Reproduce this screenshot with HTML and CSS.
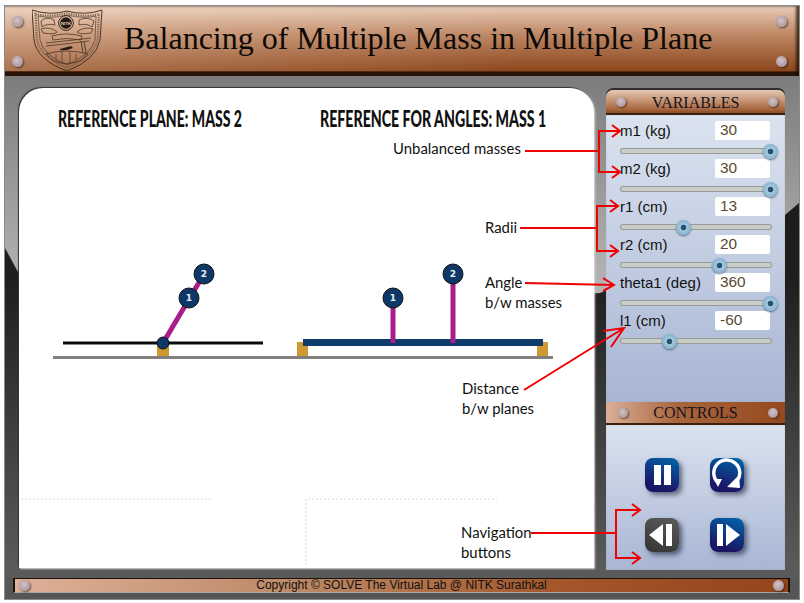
FILE: index.html
```html
<!DOCTYPE html>
<html lang="en">
<head>
<meta charset="utf-8">
<title>Balancing of Multiple Mass in Multiple Plane</title>
<link rel="stylesheet" href="styles.css">
</head>
<body>
<div class="app">
  <header class="banner">
    <span class="rivet rivet-tl"></span><span class="rivet rivet-bl"></span>
    <span class="rivet rivet-tr"></span><span class="rivet rivet-br"></span>
    <svg class="logo" viewBox="32 9 72 64" width="72" height="64" aria-label="NITK crest">
      <g fill="none" stroke="#3a2a1e">
        <path stroke-width=".9" d="M32 10 Q50 16 67 11 Q85 16 102 10 L100 40 Q96 60 67 71 Q37 60 34 40 Z"/>
        <path stroke-width=".6" d="M38 16 Q52 19 67 15 Q84 19 96 16 L95 40 Q91 55 67 65 Q43 55 40 40 Z"/>
        <path stroke-width="2" stroke="#7c5e4a" stroke-dasharray="1.2 1.2" d="M35.500 14 Q50 18 67 13 Q85 18 99 14 L97.500 40 Q93 57 67 68 Q41 57 37 40 Z"/>
        <path stroke-width=".7" d="M41 21 Q47 16 54 20 L55 25 Q47 23 42 27 Z M79 20 Q87 16 94 21 L92 27 Q87 23 79 25 Z"/>
        <path stroke-width=".7" d="M41 29 Q50 26 57 32 Q55 35 43 33 Z M77 32 Q84 26 93 29 L91 33 Q80 35 77 32 Z"/>
        <path stroke-width=".7" d="M52 36 Q66 32 82 36 L81 40 Q66 37 53 40 Z"/>
        <path stroke-width=".7" d="M46 43 Q66 41 91 38 M46 46 Q66 44 89 41"/>
        <path stroke-width=".8" d="M81 41 L83 53 M84 41 L86 53"/>
        <path stroke-width=".7" d="M46 54 Q66 48 88 54 L80 61 Q66 66 54 61 Z"/>
        <path stroke-width=".6" d="M56 60 V54 M62 63 V52 M70 63 V52 M76 60 V54"/>
        <circle cx="66" cy="23" r="7.4" stroke-width="1"/>
      </g>
      <circle cx="66" cy="23" r="5.8" fill="#241a14"/>
      <text class="logo-mark" x="66" y="24.600">NITK</text>
      <path fill="#241a14" d="M60 49 L71 46 L73 48 Q66 51 60 50 Z"/>
    </svg>
    <h1 class="title">Balancing of Multiple Mass in Multiple Plane</h1>
  </header>

  <main class="workspace">
    <section class="stage">
      <svg class="diagram" viewBox="19 88 575 480" width="575" height="480">
        <text class="plot-heading" transform="translate(58 127) scale(.65 1)" textLength="283" lengthAdjust="spacingAndGlyphs">REFERENCE PLANE: MASS 2</text>
        <text class="plot-heading" transform="translate(320 127) scale(.65 1)" textLength="348" lengthAdjust="spacingAndGlyphs">REFERENCE FOR ANGLES: MASS 1</text>

        <rect class="support" x="157" y="344" width="12" height="13"/>
        <rect class="support" x="297" y="342" width="11" height="15"/>
        <rect class="support" x="537" y="342" width="11" height="15"/>
        <line class="ground" x1="53" y1="357.5" x2="553" y2="357.5"/>

        <line class="shaft" x1="63" y1="343" x2="263" y2="343"/>
        <line class="arm" x1="163" y1="343" x2="204" y2="274"/>
        <circle class="mass" cx="163" cy="343" r="6"/>
        <circle class="mass" cx="204" cy="274" r="10"/>
        <circle class="mass" cx="189" cy="298" r="10"/>
        <text class="mass-label" x="204" y="277">2</text>
        <text class="mass-label" x="189" y="301">1</text>

        <rect class="beam" x="303" y="339" width="240" height="7"/>
        <line class="arm" x1="393" y1="298" x2="393" y2="343"/>
        <line class="arm" x1="453" y1="274" x2="453" y2="343"/>
        <circle class="mass" cx="393" cy="298" r="10"/>
        <circle class="mass" cx="453" cy="274" r="10"/>
        <text class="mass-label" x="393" y="301">1</text>
        <text class="mass-label" x="453" y="277">2</text>

        <path class="dots" d="M21 499 H211 M306 565 V499 H497"/>
      </svg>
    </section>

    <aside class="side">
      <section class="panel panel-vars">
        <h2 class="panel-head"><span class="rivet rivet-pl"></span>VARIABLES<span class="rivet rivet-pr"></span></h2>
        <div class="panel-body vars">
          <div class="var"><span class="var-name">m1 (kg)</span><span class="var-value">30</span>
            <div class="slider"><div class="track"><span class="thumb" style="left:98.7%"></span></div></div></div>
          <div class="var"><span class="var-name">m2 (kg)</span><span class="var-value">30</span>
            <div class="slider"><div class="track"><span class="thumb" style="left:98.7%"></span></div></div></div>
          <div class="var"><span class="var-name">r1 (cm)</span><span class="var-value">13</span>
            <div class="slider"><div class="track"><span class="thumb" style="left:42%"></span></div></div></div>
          <div class="var"><span class="var-name">r2 (cm)</span><span class="var-value">20</span>
            <div class="slider"><div class="track"><span class="thumb" style="left:65.7%"></span></div></div></div>
          <div class="var"><span class="var-name">theta1 (deg)</span><span class="var-value">360</span>
            <div class="slider"><div class="track"><span class="thumb" style="left:98.7%"></span></div></div></div>
          <div class="var"><span class="var-name">l1 (cm)</span><span class="var-value">-60</span>
            <div class="slider"><div class="track"><span class="thumb" style="left:32.7%"></span></div></div></div>
        </div>
      </section>
      <section class="panel panel-ctrl">
        <h2 class="panel-head panel-head-ctrl"><span class="rivet rivet-pl"></span>CONTROLS<span class="rivet rivet-pr"></span></h2>
        <div class="panel-body controls">
          <button class="btn" aria-label="Pause"><svg viewBox="0 0 34 34" width="34" height="34"><path fill="#fff" d="M9 7 H16 V27 H9 Z M19 7 H26 V27 H19 Z"/></svg></button>
          <button class="btn" aria-label="Reset"><svg viewBox="0 0 34 34" width="34" height="34"><path fill="none" stroke="#fff" stroke-width="3.4" d="M8.500 25 A13 13 0 1 1 27 23"/><path fill="#fff" d="M4 21 L12 21 L8 29 Z M17 29 L29 17 L30 30 Z"/></svg></button>
          <button class="btn btn-off" aria-label="Step back"><svg viewBox="0 0 34 34" width="34" height="34"><path fill="#fff" d="M4 17 L18 6 V28 Z M21 6 H27 V28 H21 Z"/></svg></button>
          <button class="btn" aria-label="Step forward"><svg viewBox="0 0 34 34" width="34" height="34"><path fill="#fff" d="M7 6 H13 V28 H7 Z M16 6 L30 17 L16 28 Z"/></svg></button>
        </div>
      </section>
    </aside>
  </main>

  <footer class="footer">
    <span class="rivet rivet-fl"></span>
    Copyright © SOLVE The Virtual Lab @ NITK Surathkal
    <span class="rivet rivet-fr"></span>
  </footer>
</div>

<svg class="notes" viewBox="0 0 804 603" width="804" height="603">
  <g class="note-lines">
    <path d="M525 151 H599 M620 131 H599 V172 H620 M612 125 L620 131 L612 137 M612 166 L620 172 L612 178"/>
    <path d="M520 228 H597 M618 206 H597 V251 H618 M610 200 L618 206 L610 212 M610 245 L618 251 L610 257"/>
    <path d="M525 283 L614 285 M603 278 L614 285 L603 291"/>
    <path d="M524 390 L624 328 M603 331 L624 328 L611 347"/>
    <path d="M531 533 H616 M640 510 H616 V558 H640 M632 504 L640 510 L632 516 M632 552 L640 558 L632 564"/>
  </g>
  <text class="note" x="393" y="154">Unbalanced masses</text>
  <text class="note" x="485" y="233">Radii</text>
  <text class="note" x="485" y="288">Angle</text>
  <text class="note" x="485" y="308">b/w masses</text>
  <text class="note" x="462" y="394">Distance</text>
  <text class="note" x="462" y="414">b/w planes</text>
  <text class="note" x="461" y="538">Navigation</text>
  <text class="note" x="461" y="558">buttons</text>
</svg>
</body>
</html>
```
FILE: styles.css
```css
* { box-sizing: border-box; }
html, body { margin: 0; padding: 0; }
body {
  position: relative;
  width: 804px;
  height: 603px;
  overflow: hidden;
  background: #fff;
  font-family: "Liberation Sans", Arial, sans-serif;
}

.app {
  width: 796px;
  height: 595px;
  margin: 5px 4px 3px;
  border: 1px solid #8a8a8a;
  display: flex;
  flex-direction: column;
  background: #565656;
}

/* banner */
.banner {
  position: relative;
  flex: none;
  height: 70px;
  display: flex;
  align-items: center;
  padding: 0 0 6px 119px;
  background:
    linear-gradient(90deg, rgba(255, 232, 214, .28), rgba(255, 232, 214, 0) 65%) 0 0 / 100% 65px no-repeat,
    linear-gradient(#e7cdbb 0%, #e0bfa9 8%, #c08b69 38%, #a96c47 62%, #8f4a20 90%, #8a4519 93%, #2a1509 94%, #2a1509 100%);
  box-shadow: inset -3px 0 3px rgba(30, 12, 2, .75);
}
.title {
  margin: 0;
  font: 400 32px/1 "Liberation Serif", "Times New Roman", serif;
  color: #0c0a08;
  white-space: nowrap;
}
.logo { position: absolute; left: 27px; top: 3px; }
.logo-mark {
  font: 700 4.4px "Liberation Sans", sans-serif;
  fill: #e9cdb8;
  text-anchor: middle;
}

.rivet {
  position: absolute;
  width: 11px;
  height: 11px;
  border-radius: 50%;
  background: radial-gradient(circle at 45% 40%, #d3c3c8, #ad9aa0 70%, #8f7d83);
  box-shadow: 1px 1px 2px rgba(40, 15, 0, .65);
}
.rivet-tl { left: 7px; top: 10px; }
.rivet-bl { left: 7px; top: 50px; }
.rivet-tr { right: 12px; top: 10px; }
.rivet-br { right: 12px; top: 50px; }

/* workspace */
.workspace {
  position: relative;
  flex: none;
  height: 502px;
  display: flex;
  gap: 12px;
  padding: 12px 14px 0;
  background: linear-gradient(#1b1b1b 0, #1e1e1e 200px, #5a5a5a 490px);
}
.workspace::before {
  content: "";
  position: absolute;
  left: 0;
  top: 0;
  width: 100%;
  height: 240px;
  background: linear-gradient(#7c7c7c, #bcbcbc);
  clip-path: polygon(0 0, 100% 0, 100% 127px, 780px 139px, 595px 217px, 300px 234px, 13px 196px, 0 172px);
}

.stage {
  position: relative;
  flex: none;
  width: 575px;
  height: 480px;
  background: #fff;
  border-radius: 24px 24px 0 0;
  box-shadow: -1px -1px 1px #333, 1px 1px 2px #dcdcdc;
}
.diagram { display: block; }
.plot-heading {
  font: 900 22px Lato, "Liberation Sans", sans-serif;
  fill: #111;
}
.ground { stroke: #808080; stroke-width: 3; }
.support { fill: #cc9933; }
.shaft { stroke: #0a0a0a; stroke-width: 3; }
.beam { fill: #0e3a6c; }
.arm { stroke: #a91d8b; stroke-width: 5; }
.mass { fill: #0d3766; stroke: #111; stroke-width: 1; }
.mass-label {
  font: 700 9px "DejaVu Sans", sans-serif;
  fill: #e8eef5;
  text-anchor: middle;
}
.dots { fill: none; stroke: #f6e9ed; stroke-width: 2; stroke-dasharray: 2 2; }

/* side column */
.side {
  position: relative;
  flex: none;
  width: 179px;
  height: 482px;
  display: flex;
  flex-direction: column;
}
.panel-vars { flex: none; height: 314px; display: flex; flex-direction: column; }
.panel-ctrl { flex: none; height: 168px; display: flex; flex-direction: column; }
.panel-head {
  position: relative;
  flex: none;
  height: 25px;
  margin: 0;
  text-align: center;
  font: 400 16px/25px "Liberation Serif", serif;
  color: #14141f;
  background: linear-gradient(#e6c9b5, #c3906e 45%, #a7653e 78%, #8b4a22 92%, #3c2110 93%);
  border-radius: 7px 7px 0 0;
  box-shadow: 0 -2px 0 #2e2e2e;
}
.panel-vars .panel-head { margin-top: 2px; }
.panel-head-ctrl {
  height: 23px;
  line-height: 22px;
  border-radius: 0;
  background: linear-gradient(90deg, #d9b097, #a9653c 40%, #96481e);
  border-bottom: 2px solid #3c2110;
  box-shadow: none;
}
.rivet-pl { width: 10px; height: 10px; left: 10px; top: 7px; }
.rivet-pr { width: 10px; height: 10px; right: 7px; top: 7px; }
.panel-head-ctrl .rivet-pl { left: 12px; top: 6px; }
.panel-head-ctrl .rivet-pr { top: 6px; }

.panel-body {
  flex: 1;
  background: linear-gradient(#dbe3ef, #a8b6d4);
}
.vars { padding: 6px 13px 0 14px; box-shadow: inset 0 0 1px #7f8796; }
.var {
  display: grid;
  grid-template-columns: 1fr 55px 2px;
  grid-template-rows: 20px 18px;
  color: #111;
  font-size: 15px;
  line-height: 20px;
}
.var-name { white-space: nowrap; }
.var-value {
  height: 19px;
  padding-left: 5px;
  background: #fff;
  border-radius: 2px;
  font-size: 15.4px;
  line-height: 18px;
  color: #5a4a34;
}
.slider {
  grid-column: 1 / -1;
  grid-row: 2;
  padding-top: 7px;
}
.track {
  position: relative;
  width: 152px;
  height: 6px;
  border-radius: 3px;
  background: #c9cdc9;
  box-shadow: inset 0 0 0 1px #9a9a94;
}
.thumb {
  position: absolute;
  top: -4.5px;
  width: 15px;
  height: 15px;
  margin-left: -7.5px;
  border-radius: 50%;
  background: radial-gradient(circle, #27506f 0 2.4px, #a4cadf 3.2px, #84b2cd 7.5px);
  box-shadow: 0 1px 2px rgba(20, 30, 50, .6);
}

.controls {
  display: grid;
  grid-template-columns: 34px 34px;
  grid-template-rows: 34px 34px;
  gap: 26px 31px;
  padding: 33px 0 0 39px;
  box-shadow: inset 0 0 1px #7f8796;
}
.btn {
  width: 34px;
  height: 34px;
  padding: 0;
  border: 0;
  border-radius: 8px;
  background: linear-gradient(200deg, #0067ab, #1b1565 80%);
  box-shadow: 3px 3px 5px rgba(10, 15, 40, .55);
}
.btn svg { display: block; }
.btn-off { background: linear-gradient(200deg, #5c5c5c, #333); }

/* footer */
.footer {
  position: relative;
  flex: none;
  height: 15px;
  margin: 0 9px 6px 8px;
  text-align: center;
  font-size: 12px;
  line-height: 13px;
  color: #111;
  border-top: 1px solid #1a1208;
  border-left: 2px solid #1a1208;
  border-right: 2px solid #1a1208;
  border-bottom: 1px solid #a8a8a8;
  background: linear-gradient(90deg, #deb199, #b98460 40%, #a3572a 70%, #93451b);
}
.rivet-fl { width: 11px; height: 11px; left: 4px; top: 1px; }
.rivet-fr { width: 11px; height: 11px; right: 4px; top: 1px; }

/* annotations lying over the whole lab */
.notes { position: absolute; left: 0; top: 0; pointer-events: none; }
.note-lines path { fill: none; stroke: #f00000; stroke-width: 2; }
.note { font: 400 14.9px Lato, "Liberation Sans", sans-serif; fill: #111; }
```
